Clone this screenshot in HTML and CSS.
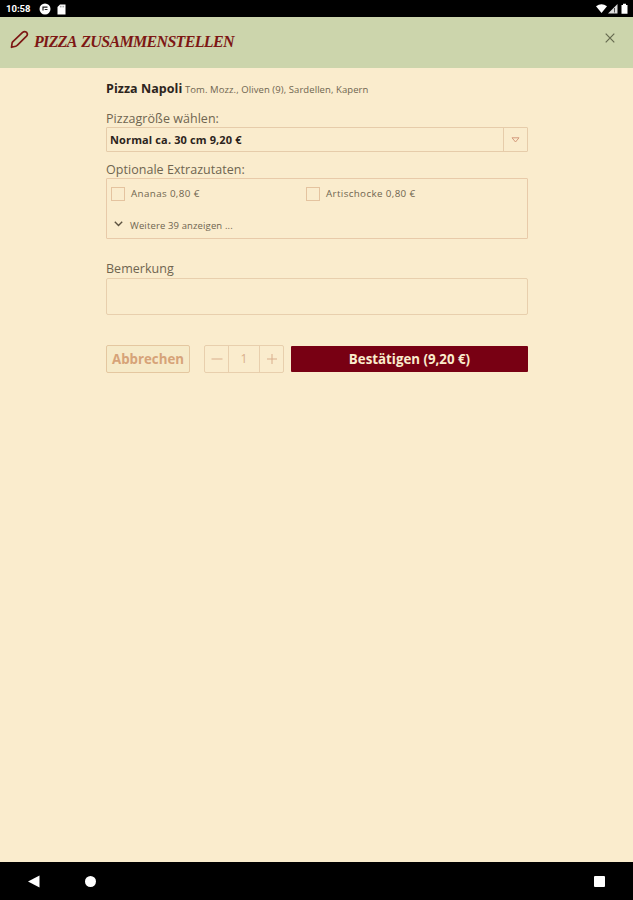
FILE: index.html
```html
<!DOCTYPE html>
<html lang="de">
<head>
  <meta charset="utf-8">
  <title>Pizza zusammenstellen</title>
  <link rel="stylesheet" href="styles.css">
</head>
<body>
  <!-- Statusleiste -->
  <div class="status-bar">
    <span class="clock">10:58</span>
    <svg class="status-app" width="12" height="12" viewBox="0 0 12 12">
      <circle cx="6" cy="6" r="5.5" fill="#fff"/>
      <path d="M4 7.500V4.200h4.500M6.300 7V6.500h2.200" fill="none" stroke="#222" stroke-width="1.200"/>
    </svg>
    <svg class="status-card" width="9" height="11" viewBox="0 0 9 11">
      <path d="M3 .5h5.500v10H.5V3z" fill="#fff"/>
      <path d="M3.400 1.800v1.600M5 1.800v1.600M6.600 1.800v1.600" stroke="#777" stroke-width=".7"/>
    </svg>
    <svg class="status-right" width="34" height="12" viewBox="0 0 34 12">
      <path d="M0 3.300Q5.500-.8 11 3.300L5.500 10z" fill="#fff"/>
      <path d="M21.500 1v9.500H12z" fill="#ddd"/>
      <path d="M18.500 5v4.500" stroke="#555" stroke-width="1"/>
      <path d="M25.500 2h1.500V.8h3V2h1.500v8.700h-6z" fill="#fff"/>
    </svg>
  </div>

  <!-- Kopfzeile -->
  <div class="header">
    <svg class="pencil" width="19" height="19" viewBox="0 0 19 19" fill="none" stroke="#7d1714" stroke-width="1.700" stroke-linejoin="round">
      <path d="M1.500 17.300l.6-4.300q.2-.8.800-1.400L12.600 2.400q1.900-1.600 3.700-.2l.5.500q1.300 1.600-.3 3.400L7.200 15.300q-.6.700-1.400.9z"/>
    </svg>
    <h1>PIZZA ZUSAMMENSTELLEN</h1>
    <svg class="close" width="10" height="10" viewBox="0 0 10 10">
      <path d="M.7.7l8.600 8.600M9.300.7L.7 9.300" stroke="#65694f" stroke-width="1.200"/>
    </svg>
  </div>

  <!-- Formular -->
  <div class="content">
    <div class="product"><b>Pizza Napoli</b><span>Tom. Mozz., Oliven (9), Sardellen, Kapern</span></div>

    <div class="label">Pizzagröße wählen:</div>
    <div class="select">
      <span class="select-value">Normal ca. 30 cm 9,20 €</span>
      <span class="select-arrow">
        <svg width="9" height="6" viewBox="0 0 9 6"><path d="M1 .8h7L4.500 5z" fill="none" stroke="#d39a7c" stroke-width="1"/></svg>
      </span>
    </div>

    <div class="label label-extras">Optionale Extrazutaten:</div>
    <div class="extras">
      <div class="extras-row">
        <div class="extra"><span class="checkbox"></span><span class="extra-name">Ananas 0,80 €</span></div>
        <div class="extra"><span class="checkbox"></span><span class="extra-name">Artischocke 0,80 €</span></div>
      </div>
      <div class="more">
        <svg width="9" height="6" viewBox="0 0 9 6"><path d="M.8.8l3.700 3.700L8.200.8" fill="none" stroke="#5c5240" stroke-width="1.400"/></svg>
        <span>Weitere 39 anzeigen ...</span>
      </div>
    </div>

    <div class="label label-note">Bemerkung</div>
    <div class="note"></div>

    <div class="actions">
      <div class="cancel">Abbrechen</div>
      <div class="counter">
        <span class="step"><svg width="12" height="12" viewBox="0 0 12 12"><path d="M.5 6h11" stroke="#d9ae8c"/></svg></span>
        <span class="amount">1</span>
        <span class="step"><svg width="12" height="12" viewBox="0 0 12 12"><path d="M1 6h10M6 1v10" stroke="#d9ae8c"/></svg></span>
      </div>
      <div class="confirm">Bestätigen (9,20 €)</div>
    </div>
  </div>

  <!-- Navigationsleiste -->
  <div class="nav-bar">
    <svg width="12" height="13" viewBox="0 0 12 13"><path d="M0 6.500L11.500.5v12z" fill="#fff"/></svg>
    <span class="nav-home"></span>
    <span class="nav-recent"></span>
  </div>
</body>
</html>
```
FILE: styles.css
```css
* {
  box-sizing: border-box;
}

body {
  margin: 0;
  height: 900px;
  display: flex;
  flex-direction: column;
  overflow: hidden;
  background-color: #faeccd;
  font-family: "Open Sans", "Noto Sans", sans-serif;
  color: #6f6550;
}

svg {
  display: block;
  flex: none;
}

/* Statusleiste */
.status-bar {
  height: 17px;
  flex: none;
  display: flex;
  align-items: center;
  padding: 1px 3px 0 6px;
  background-color: #000;
}

.clock {
  width: 33px;
  color: #fff;
  font: bold 9.5px/12px Roboto, sans-serif;
}

.status-card {
  margin-left: 6px;
}

.status-right {
  margin-left: auto;
}

/* Kopfzeile */
.header {
  height: 51px;
  flex: none;
  display: flex;
  align-items: center;
  padding: 0 18px 3px 10px;
  background-color: #ccd5ac;
}

.pencil {
  margin-top: -3px;
}

h1 {
  margin: 2px 0 0 5px;
  color: #7d1714;
  font: italic bold 16px/20px "Liberation Serif", serif;
  letter-spacing: -0.68px;
  word-spacing: 2px;
  white-space: nowrap;
}

.close {
  margin: -6px 0 0 auto;
}

/* Formular */
.content {
  width: 422px;
  flex: 1;
  margin-left: 106px;
  padding-top: 9px;
}

.product {
  height: 20px;
  line-height: 20px;
  white-space: nowrap;
}

.product b {
  display: inline-block;
  width: 79px;
  color: #2c241c;
  font-size: 12.5px;
  letter-spacing: 0.05px;
}

.product span {
  font-size: 9.5px;
  letter-spacing: 0.08px;
}

.label {
  height: 16px;
  margin-top: 14px;
  font-size: 12.5px;
  line-height: 15px;
  letter-spacing: 0.04px;
  white-space: nowrap;
}

.select {
  height: 25px;
  display: flex;
  border: 1px solid #e6ccaa;
  border-radius: 1px;
}

.select-value {
  flex: 1;
  padding-left: 3px;
  color: #2c241c;
  font-size: 11px;
  font-weight: bold;
  letter-spacing: 0.13px;
  line-height: 23px;
}

.select-arrow {
  width: 24px;
  display: flex;
  align-items: center;
  justify-content: center;
  border-left: 1px solid #e6ccaa;
}

.label-extras {
  margin-top: 10px;
}

.extras {
  height: 61px;
  padding: 7px 4px 0;
  border: 1px solid #e8caa9;
  border-radius: 1px;
  font-size: 9.5px;
  line-height: 16px;
  letter-spacing: 0.13px;
}

.extras-row {
  display: grid;
  grid-template-columns: 195px 1fr;
}

.extra {
  display: flex;
  align-items: center;
}

.extra-name {
  font-size: 9.8px;
  letter-spacing: 0.37px;
}

.checkbox {
  width: 14px;
  height: 14px;
  margin-right: 6px;
  border: 1px solid #e4c39f;
}

.more {
  display: flex;
  align-items: center;
  gap: 7px;
  margin-top: 16px;
  padding-left: 3px;
}

.more svg {
  margin-top: -4px;
}

.label-note {
  margin-top: 23px;
  line-height: 13px;
}

.note {
  height: 37px;
  border: 1px solid #e8cfad;
  border-radius: 2px;
}

/* Buttons */
.actions {
  height: 28px;
  display: flex;
  margin-top: 30px;
}

.cancel {
  width: 84px;
  border: 1px solid #e4c7a0;
  border-radius: 2px;
  background-color: #f6eac8;
  color: #d6a378;
  font-size: 13.3px;
  font-weight: bold;
  line-height: 26px;
  text-align: center;
}

.counter {
  width: 80px;
  display: flex;
  margin-left: 14px;
  border: 1px solid #e8cfad;
  border-radius: 2px;
}

.step {
  width: 23px;
  display: flex;
  align-items: center;
  justify-content: center;
}

.amount {
  flex: 1;
  border: solid #e8cfad;
  border-width: 0 1px;
  color: #d9ae8c;
  font-size: 12px;
  line-height: 26px;
  text-align: center;
}

.confirm {
  flex: 1;
  height: 26px;
  margin: 1px 0 0 7px;
  border-radius: 1px;
  background-color: #780013;
  color: #faeccd;
  font-size: 13.3px;
  font-weight: bold;
  line-height: 26px;
  text-align: center;
}

/* Navigationsleiste */
.nav-bar {
  height: 38px;
  flex: none;
  display: flex;
  align-items: center;
  padding: 0 28px;
  background-color: #000;
}

.nav-home {
  width: 11px;
  height: 11px;
  margin-left: 45px;
  border-radius: 50%;
  background-color: #fff;
}

.nav-recent {
  width: 11px;
  height: 11px;
  margin-left: auto;
  border-radius: 1px;
  background-color: #fff;
}
```
